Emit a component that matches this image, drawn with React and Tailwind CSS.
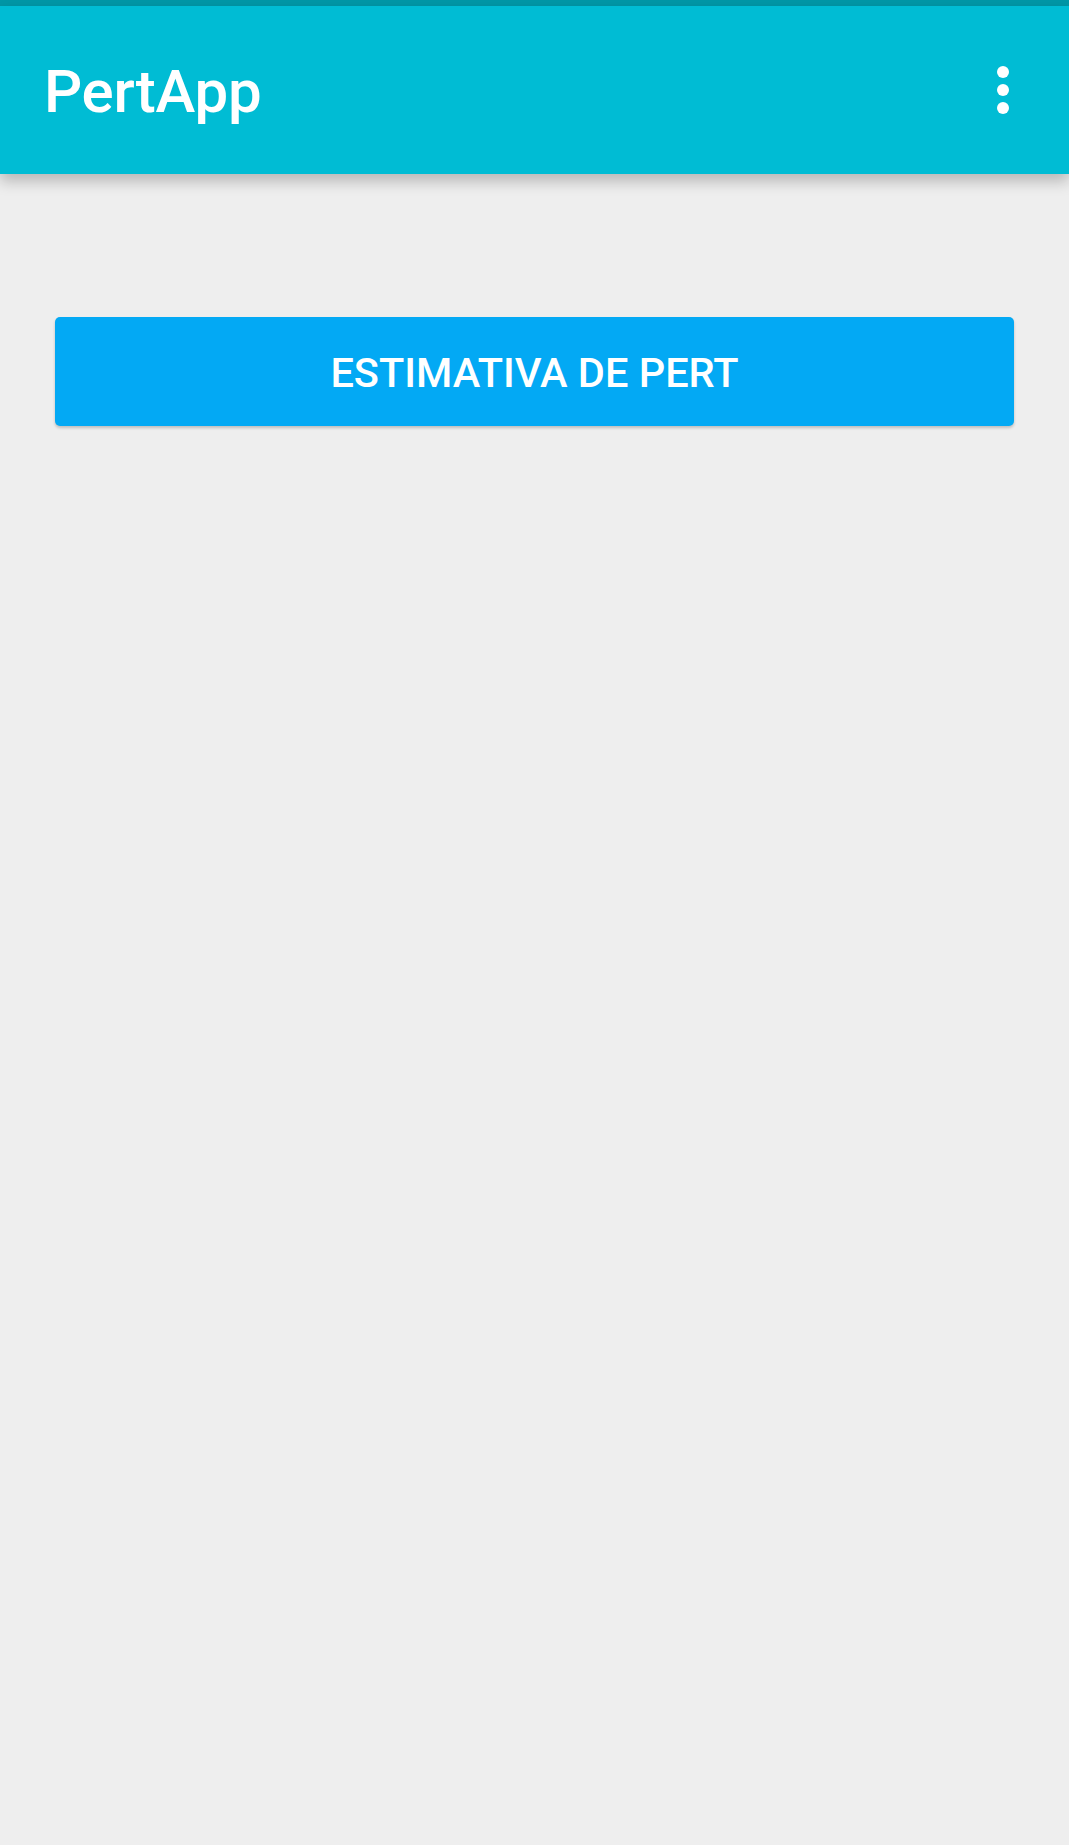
import React from 'react';

const MoreIcon = () => (
    <div className="flex flex-col items-center gap-[6px]">
        <span className="w-[12px] h-[12px] rounded-full bg-white" />
        <span className="w-[12px] h-[12px] rounded-full bg-white" />
        <span className="w-[12px] h-[12px] rounded-full bg-white" />
    </div>
);

const App = () => {
    return (
        <div className="min-h-[1845px] bg-[#eeeeee] font-['Roboto',sans-serif]">
            <div className="h-[6px] bg-[#0097a7]" />
            <header className="relative z-10 h-[168px] bg-[#00bcd4] flex items-center justify-between pl-[44px] pr-[60px] shadow-[0_7px_14px_rgba(0,0,0,0.24)]">
                <h1 className="text-[60px] font-medium text-white leading-none mt-[4px] tracking-[-0.3px]">PertApp</h1>
                <MoreIcon />
            </header>
            <main className="px-[55px] pt-[143px]">
                <button className="w-full h-[109px] rounded-[5px] bg-[#03a9f4] text-white text-[41.5px] font-medium pt-[4px] shadow-[0_2px_3px_rgba(0,0,0,0.2)]">
                    ESTIMATIVA DE PERT
                </button>
            </main>
        </div>
    );
};

export default App;
